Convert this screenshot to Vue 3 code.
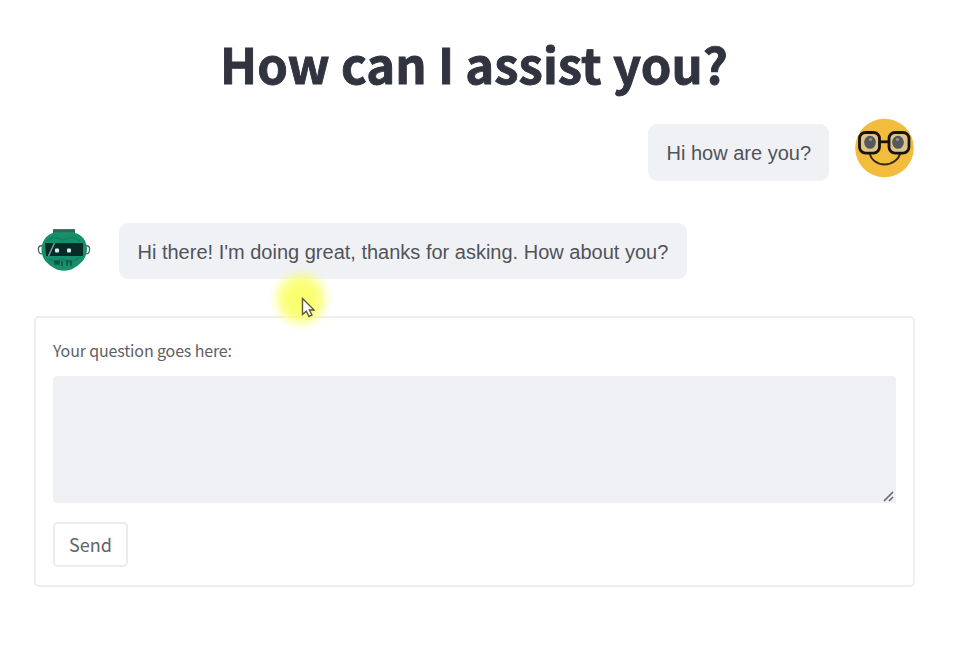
<script setup>
import { ref } from 'vue'

const question = ref('')
const send = () => { question.value = '' }
</script>

<template>
  <main class="page">
    <h1 class="title">How can I assist you?</h1>

    <div class="row user">
      <p class="bubble">Hi how are you?</p>
      <svg class="face" viewBox="0 0 60 60" aria-hidden="true">
        <circle cx="29.500" cy="30" r="29.300" fill="#f2bc3c" />
        <path d="M14.500 34c1 8 8 12.500 15 12.500S44 42 45.500 34" fill="none" stroke="#382a10" stroke-width="2" />
        <g fill="#dfc487" stroke="#17130d" stroke-width="2.800">
          <rect x="4.500" y="14.500" width="20" height="20.600" rx="6" />
          <rect x="34" y="14.500" width="20" height="20.600" rx="6" />
        </g>
        <path d="M24.500 23.800h9.500" stroke="#17130d" stroke-width="2.800" />
        <ellipse cx="15" cy="24.300" rx="5.800" ry="6.500" fill="#55585d" />
        <ellipse cx="43" cy="24.300" rx="5.800" ry="6.500" fill="#55585d" />
        <circle cx="15.500" cy="21.500" r="1.500" fill="#96958f" />
        <circle cx="42.500" cy="21.500" r="1.500" fill="#96958f" />
      </svg>
    </div>

    <div class="row bot">
      <svg class="robot" viewBox="0 0 54 44" aria-hidden="true">
        <path d="M6 18c-4-1-5 1.500-4.500 4.500s2 4 4.500 3M48 18c4-1 5 1.500 4.500 4.500s-2 4-4.500 3" fill="#fff" stroke="#4c5d57" stroke-width="1.300" />
        <path d="M16 1.500h22V5c7 1.500 11.500 7.500 12 15.500C50 30 44 36 37 40c-5 3.500-15 3.500-20 0C10 36 4 30 4.500 20.500 5 12.500 10 6.500 16 5z" fill="#168f6a" />
        <path d="M16 1.200h22v3H16z" fill="#356454" />
        <path d="M10 13l7-4 9 3 9-3 8 4M12 31l6 3 7-3 8 4 9-5" fill="none" stroke="#118060" stroke-width="1.500" />
        <path d="M8 15h38v13H9z" fill="#082b28" />
        <path d="M17.500 15l-6 13" stroke="#7d9b91" stroke-width="1.500" />
        <path d="M18 33h4v3h-4zM25 33v5M29 33h6M30 33v5M34 34v4" fill="#0b4f3e" stroke="#0b5a45" stroke-width="1.600" />
        <rect x="18" y="20.500" width="4" height="4" rx="1" fill="#d7f4ec" />
        <rect x="30" y="20.500" width="4" height="4" rx="1" fill="#d7f4ec" />
      </svg>
      <p class="bubble">Hi there! I'm doing great, thanks for asking. How about you?</p>
    </div>

    <form class="form" @submit.prevent="send">
      <label class="label" for="question">Your question goes here:</label>
      <div class="field">
        <textarea id="question" v-model="question"></textarea>
        <svg class="grip" viewBox="0 0 14 12" aria-hidden="true">
          <path d="M2 11L11 2M7 11l4-4" stroke="#666" stroke-width="1.600" />
        </svg>
      </div>
      <button class="send" type="submit">Send</button>
    </form>

    <div class="pointer" aria-hidden="true">
      <svg viewBox="0 0 14 21">
        <path d="M1.500 1.500v16l3.800-3.300 2.700 5.300 3-1.500-2.700-5h4.700z" fill="#fff" stroke="#5c5838" stroke-width="1.400" />
      </svg>
    </div>
  </main>
</template>

<style>
body { background: #fff; }
</style>

<style scoped>
.page {
  position: relative;
  box-sizing: border-box;
  width: 955px;
  height: 653px;
  padding: 27px 40px 0 34px;
  overflow: hidden;
  background: #fff;
  color: #31333f;
  font-family: "Noto Sans CJK SC", sans-serif;
}
.title {
  margin: 0 0 0 186px;
  height: 91px;
  font-size: 49px;
  line-height: 72px;
  letter-spacing: 0.05px;
  font-weight: 700;
  -webkit-text-stroke: 0.9px #31333f;
  white-space: nowrap;
}
.row { display: flex; }
.user {
  justify-content: flex-end;
  height: 105px;
  gap: 26px;
}
.user .bubble { margin-top: 6px; width: 181px; height: 57px; }
.face { width: 60px; height: 60px; }
.bubble {
  box-sizing: border-box;
  margin: 0;
  padding: 1px 0 0 18.5px;
  border-radius: 9px;
  background: #f0f1f4;
  color: #50535a;
  font-family: "Liberation Sans", Arial, sans-serif;
  font-size: 20px;
  line-height: 57px;
  white-space: nowrap;
}
.bot { height: 93px; padding-left: 3px; gap: 28px; }
.bot .bubble { width: 568px; height: 56px; }
.robot { width: 54px; height: 44px; margin-top: 5px; }
.form {
  box-sizing: border-box;
  width: 881px;
  height: 271px;
  padding: 16px 17px 0;
  border: 2px solid #eeeeef;
  border-radius: 5px;
}
.label {
  display: block;
  height: 42px;
  font-size: 16px;
  line-height: 32px;
  letter-spacing: -0.15px;
  color: #5f6066;
}
.field { position: relative; height: 127px; }
textarea {
  display: block;
  box-sizing: border-box;
  width: 100%;
  height: 127px;
  border: 0;
  border-radius: 4px;
  background: #eff0f4;
  resize: none;
  outline: none;
}
.grip { position: absolute; right: 0; bottom: 1px; width: 14px; height: 12px; }
.send {
  display: block;
  box-sizing: border-box;
  width: 75px;
  height: 45px;
  margin-top: 19px;
  padding: 0;
  border: 2px solid #ececee;
  border-radius: 5px;
  background: #fff;
  color: #626368;
  font-family: inherit;
  font-size: 18px;
  line-height: 39px;
}
.pointer {
  position: absolute;
  left: 269px;
  top: 267px;
  width: 64px;
  height: 64px;
  background: radial-gradient(circle closest-side, #faff70 0 38%, rgba(250, 255, 112, 0.75) 62%, rgba(250, 255, 112, 0.3) 80%, rgba(250, 255, 112, 0) 100%);
}
.pointer svg { position: absolute; left: 32px; top: 30px; width: 14px; height: 21px; }
</style>
